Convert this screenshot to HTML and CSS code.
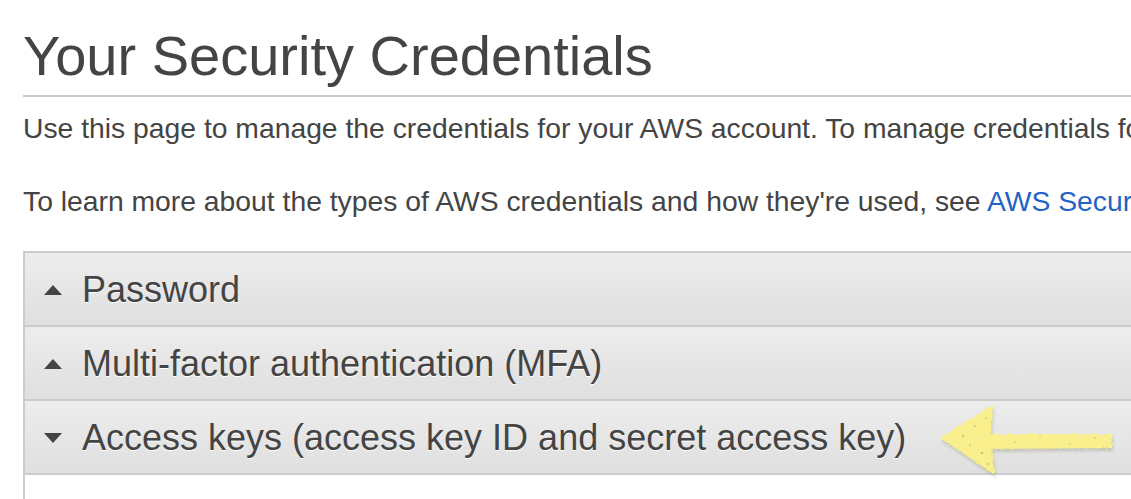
FILE: index.html
```html
<!DOCTYPE html>
<html lang="en">
<head>
<meta charset="utf-8">
<title>Your Security Credentials</title>
<link rel="stylesheet" href="styles.css">
</head>
<body>
<div class="page">
  <h1 class="title">Your Security Credentials</h1>
  <hr class="rule">
  <p class="intro">Use this page to manage the credentials for your AWS account. To manage credentials for AWS Identity and Access Management (IAM) users, use the IAM Console.</p>
  <p class="intro">To learn more about the types of AWS credentials and how they're used, see <a class="link" href="#">AWS Security Credentials</a> in AWS General Reference.</p>

  <div class="accordion">
    <div class="acc-head">
      <span class="tri tri-up"></span>
      <span class="acc-label">Password</span>
    </div>
    <div class="acc-head">
      <span class="tri tri-up"></span>
      <span class="acc-label">Multi-factor authentication (MFA)</span>
    </div>
    <div class="acc-head">
      <span class="tri tri-down"></span>
      <span class="acc-label">Access keys (access key ID and secret access key)</span>
    </div>
    <div class="acc-body"></div>
  </div>

  <svg class="annot" width="190" height="84" viewBox="0 0 190 84" aria-hidden="true">
    <defs>
      <filter id="rough" x="-10%" y="-20%" width="120%" height="140%">
        <feTurbulence type="fractalNoise" baseFrequency="0.9" numOctaves="2" seed="3" result="n"/>
        <feDisplacementMap in="SourceGraphic" in2="n" scale="4" xChannelSelector="R" yChannelSelector="G"/>
      </filter>
      <filter id="shadow" x="-10%" y="-20%" width="120%" height="150%">
        <feGaussianBlur stdDeviation="1.6"/>
      </filter>
    </defs>
    <g transform="translate(1,3)" filter="url(#shadow)" opacity="0.35">
      <path d="M10 40 L63 7 L61 36 L182 36 L182 50 L62 51 L65 77 Z" fill="#8a8a7a"/>
    </g>
    <g filter="url(#rough)">
      <path d="M10 40 L63 7 L61 36 L182 36 L182 50 L62 51 L65 77 Z" fill="#f9ef8c"/>
    </g>
    <g fill="#bdb88f" opacity="0.8">
      <circle cx="33" cy="38" r="1.2"/>
      <circle cx="45" cy="28" r="1"/>
      <circle cx="52" cy="55" r="1.3"/>
      <circle cx="40" cy="47" r="0.9"/>
      <circle cx="58" cy="66" r="1.1"/>
      <circle cx="56" cy="20" r="0.9"/>
      <circle cx="85" cy="44" r="0.8"/>
      <circle cx="110" cy="39" r="0.8"/>
      <circle cx="140" cy="46" r="0.8"/>
      <circle cx="165" cy="40" r="0.8"/>
    </g>
  </svg>
</div>
</body>
</html>
```

FILE: styles.css
```css
html, body {
  margin: 0;
  padding: 0;
  background: #ffffff;
  overflow: hidden;
}

.page {
  position: relative;
  width: 1400px;
  height: 499px;
  padding: 24px 0 0 23px;
  box-sizing: border-box;
  font-family: "Liberation Sans", Arial, Helvetica, sans-serif;
  color: #444444;
}

.title {
  margin: 0;
  font-size: 56px;
  font-weight: normal;
  line-height: 64px;
  white-space: nowrap;
}

.rule {
  margin: 7px 0 0 0;
  border: 0;
  height: 2px;
  background: #cccccc;
}

.intro {
  margin: 15px 0 0 0;
  font-size: 28.3px;
  line-height: 32px;
  white-space: nowrap;
}

.intro + .intro {
  margin-top: 41px;
}

.link {
  color: #1f63c6;
  text-decoration: none;
}

.accordion {
  margin-top: 34px;
  display: flex;
  flex-direction: column;
}

.acc-head {
  display: flex;
  align-items: center;
  gap: 20px;
  height: 70px;
  padding: 2px 0 0 19px;
  border-top: 2px solid #cccccc;
  border-left: 2px solid #cccccc;
  background: linear-gradient(#ededed, #dfdfdf);
}

.acc-body {
  height: 40px;
  border-top: 2px solid #cccccc;
  border-left: 2px solid #cccccc;
  background: #ffffff;
}

.tri {
  width: 0;
  height: 0;
  border-left: 9px solid transparent;
  border-right: 9px solid transparent;
  flex: none;
}

.tri-up {
  border-bottom: 10px solid #444444;
}

.tri-down {
  border-top: 10px solid #444444;
}

.acc-label {
  font-size: 36px;
  line-height: 40px;
  color: #444444;
  text-shadow: 0 1px 0 #ffffff;
  white-space: nowrap;
}

.annot {
  position: absolute;
  left: 930px;
  top: 398px;
}
```
